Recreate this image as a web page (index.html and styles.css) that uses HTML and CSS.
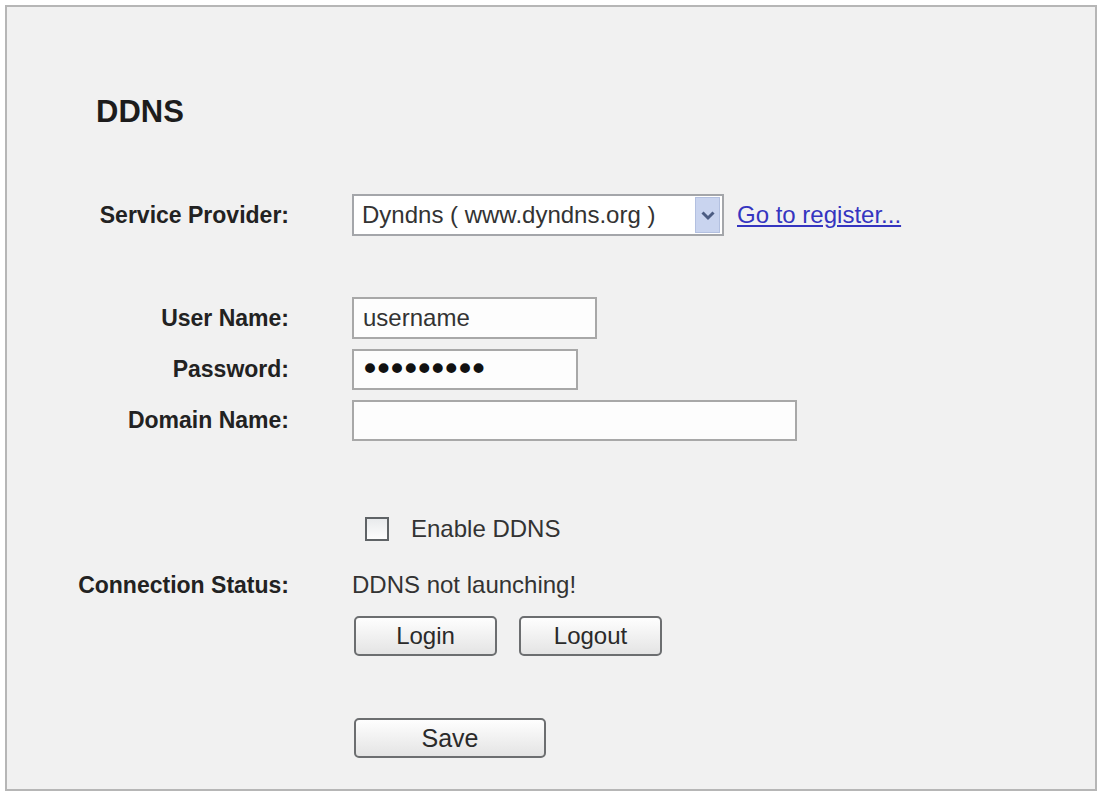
FILE: index.html
```html
<!doctype html>
<html lang="en">
  <head>
    <meta charset="utf-8">
    <title>DDNS</title>
    <link rel="stylesheet" href="styles.css">
  </head>
  <body>
    <div class="panel">
      <h1 class="title">DDNS</h1>

      <div class="row row-provider">
        <div class="label">Service Provider:</div>
        <div class="value">
          <div class="select">
            <span class="select-text">Dyndns ( www.dyndns.org )</span>
            <span class="select-arrow">
              <svg width="16" height="11" viewBox="0 0 16 11"><path d="M2.5 2.5 L8 8 L13.5 2.5" fill="none" stroke="#4c5c82" stroke-width="3"/></svg>
            </span>
          </div>
          <a class="link" href="#">Go to register...</a>
        </div>
      </div>

      <div class="row row-user">
        <div class="label">User Name:</div>
        <div class="value"><input class="field field-user" type="text" value="username"></div>
      </div>

      <div class="row row-field">
        <div class="label">Password:</div>
        <div class="value"><input class="field field-pass" type="password" value="password1"></div>
      </div>

      <div class="row row-field">
        <div class="label">Domain Name:</div>
        <div class="value"><input class="field field-domain" type="text" value=""></div>
      </div>

      <div class="row row-check">
        <div class="label"></div>
        <div class="value">
          <span class="checkbox"></span>
          <span class="text">Enable DDNS</span>
        </div>
      </div>

      <div class="row row-status">
        <div class="label">Connection Status:</div>
        <div class="value"><span class="text">DDNS not launching!</span></div>
      </div>

      <div class="row row-buttons">
        <div class="label"></div>
        <div class="value">
          <button class="btn btn-small">Login</button>
          <button class="btn btn-small">Logout</button>
        </div>
      </div>

      <div class="row row-save">
        <div class="label"></div>
        <div class="value">
          <button class="btn btn-save">Save</button>
        </div>
      </div>
    </div>
  </body>
</html>
```

FILE: styles.css
```css
/* Reset */
* {
  margin: 0;
  padding: 0;
  box-sizing: border-box;
}

body {
  background-color: #fff;
  font-family: "Liberation Sans", Arial, sans-serif;
  color: #2b2b2b;
}

/* Main panel */
.panel {
  margin: 5px 3px 0 5px;
  height: 786px;
  border: 2px solid #b6b6b6;
  background-color: #f1f1f1;
}

.title {
  margin: 87px 0 0 89px;
  height: 36px;
  line-height: 36px;
  font-size: 31px;
  font-weight: bold;
  color: #1c1c1c;
}

/* Form rows */
.row {
  display: grid;
  grid-template-columns: 282px 1fr;
  column-gap: 63px;
  align-items: center;
}

.label {
  text-align: right;
  font-size: 23px;
  font-weight: bold;
  color: #222;
}

.value {
  display: flex;
  align-items: center;
}

.text {
  font-size: 24px;
  color: #333;
}

.row-provider { margin-top: 64px; height: 42px; }
.row-user { margin-top: 61px; height: 42px; }
.row-field { margin-top: 9px; height: 42px; }
.row-check { margin-top: 73px; height: 30px; }
.row-status { margin-top: 26px; height: 30px; }
.row-buttons { margin-top: 16px; height: 40px; }
.row-save { margin-top: 62px; height: 40px; }

/* Select box */
.select {
  display: flex;
  align-items: center;
  width: 372px;
  height: 42px;
  border: 2px solid #a4a6aa;
  background-color: #fff;
  padding: 0 2px 0 8px;
}

.select-text {
  flex: 1;
  font-size: 24px;
  color: #333;
}

.select-arrow {
  display: flex;
  align-items: center;
  justify-content: center;
  width: 25px;
  height: 36px;
  background-color: #c9d4ef;
  border: 1px solid #b3c0e0;
}

.link {
  margin-left: 13px;
  font-size: 24px;
  color: #3535c0;
  text-decoration: underline;
}

/* Text inputs */
.field {
  height: 42px;
  border: 2px solid #a8a8a8;
  background-color: #fdfdfd;
  padding: 0 9px;
  font-family: "Liberation Sans", Arial, sans-serif;
  font-size: 24px;
  color: #333;
  outline: none;
}

.field-user { width: 245px; }
.field-pass {
  width: 226px;
  height: 41px;
  padding-left: 6px;
  font-family: "DejaVu Sans", sans-serif;
  font-size: 34px;
  letter-spacing: -6.5px;
  color: #111;
}
.field-domain { width: 445px; height: 41px; }

/* Checkbox */
.checkbox {
  display: inline-block;
  width: 24px;
  height: 24px;
  margin: 0 22px 0 13px;
  border: 2px solid #5f6366;
  background: linear-gradient(#e8eaec, #fdfdfd);
}

/* Buttons */
.btn {
  height: 40px;
  border: 2px solid #6c6e70;
  border-radius: 5px;
  background: linear-gradient(#fefefe, #e4e4e4);
  font-family: "Liberation Sans", Arial, sans-serif;
  font-size: 24px;
  color: #2a2a2a;
  margin-left: 2px;
}

.btn-small {
  width: 143px;
  margin-right: 20px;
}

.btn-save {
  width: 192px;
  font-size: 25px;
}
```
